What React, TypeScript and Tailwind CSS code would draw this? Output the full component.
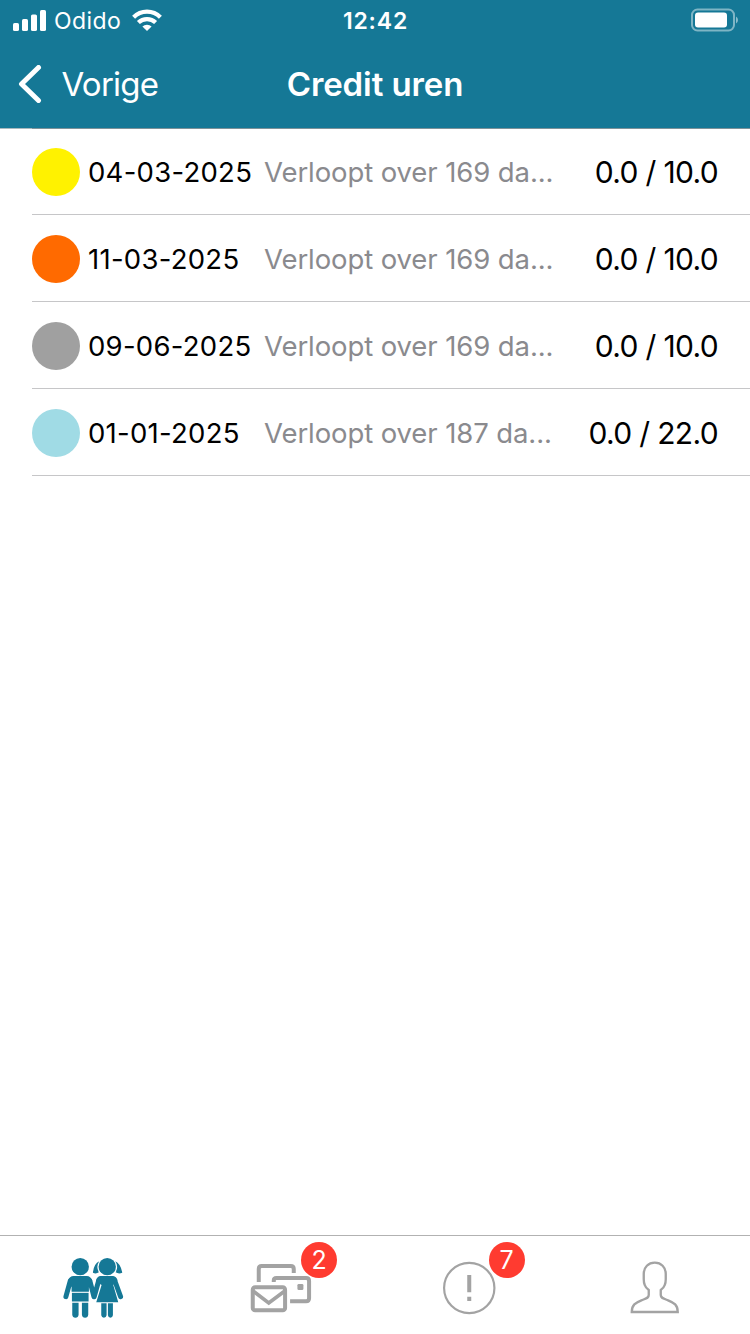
import type { ReactNode } from 'react'

interface Credit {
  date: string
  color: string
  expiry: string
  hours: string
}

const credits: Credit[] = [
  { date: '04-03-2025', color: 'bg-[#fff200]', expiry: 'Verloopt over 169 da...', hours: '0.0 / 10.0' },
  { date: '11-03-2025', color: 'bg-[#ff6a00]', expiry: 'Verloopt over 169 da...', hours: '0.0 / 10.0' },
  { date: '09-06-2025', color: 'bg-[#a0a0a0]', expiry: 'Verloopt over 169 da...', hours: '0.0 / 10.0' },
  { date: '01-01-2025', color: 'bg-[#a0dbe5]', expiry: 'Verloopt over 187 da...', hours: '0.0 / 22.0' },
]

function StatusBar() {
  return (
    <div className="grid h-10 grid-cols-3 items-center pl-[13px] pr-3">
      <div className="flex items-center">
        <svg width="33" height="21" viewBox="0 0 33 21" fill="#fff">
          <rect x="0" y="13" width="6" height="8" rx="1.6" />
          <rect x="9" y="9" width="6" height="12" rx="1.6" />
          <rect x="18" y="4.5" width="6" height="16.5" rx="1.6" />
          <rect x="27" y="0" width="6" height="21" rx="1.6" />
        </svg>
        <span className="ml-2 w-[78px] whitespace-nowrap pt-0.5 text-[23px] leading-none tracking-[0.4px]">Odido</span>
        <svg width="30" height="22" viewBox="0 0 30 22" fill="none" stroke="#fff" strokeWidth="4.2">
          <path d="M1.6 8.2a19 19 0 0 1 26.8 0" />
          <path d="M6.4 13.6a12.2 12.2 0 0 1 17.2 0" />
          <path d="M15 22l-4.6-4.4a6.5 6.5 0 0 1 9.2 0z" fill="#fff" stroke="none" />
        </svg>
      </div>
      <div className="pt-0.5 text-center text-[23px] font-semibold leading-none tracking-[0.8px]">12:42</div>
      <svg className="justify-self-end" width="48" height="24" viewBox="0 0 48 24">
        <rect x="2" y="1.5" width="42" height="21" rx="5.5" fill="none" stroke="#fff" strokeOpacity="0.45" strokeWidth="2" />
        <rect x="5" y="4.5" width="32" height="15" rx="3" fill="#fff" />
        <path d="M46 8.5q2 1 2 3.5t-2 3.5z" fill="#fff" fillOpacity="0.5" />
      </svg>
    </div>
  )
}

function NavBar() {
  return (
    <div className="grid h-[88px] grid-cols-3 items-center">
      <button className="flex items-center pl-[18px]">
        <svg width="24" height="38" viewBox="0 0 24 38" fill="none" stroke="#fff" strokeWidth="5" strokeLinecap="round" strokeLinejoin="round">
          <path d="M20.500 2.500L3.500 19L20.500 35.500" />
        </svg>
        <span className="ml-[19.5px] pt-px text-[33px] leading-none tracking-[-0.75px]">Vorige</span>
      </button>
      <h1 className="whitespace-nowrap text-center text-[33px] font-semibold leading-none tracking-[-0.1px]">Credit uren</h1>
    </div>
  )
}

function CreditRow({ credit }: { credit: Credit }) {
  return (
    <li className="ml-8 flex h-[87px] items-center border-b border-[#c6c6c8] pr-8 pt-0.5 first:h-[86px] first:pt-px">
      <span className={`size-12 shrink-0 rounded-full ${credit.color}`} />
      <span className="ml-2 w-[176px] shrink-0 whitespace-nowrap pt-0.5 text-[27.5px] leading-none tracking-[0.27px]">{credit.date}</span>
      <span className="whitespace-nowrap pt-0.5 text-[27.5px] leading-none tracking-[-0.1px] text-[#8a8a8e]">{credit.expiry}</span>
      <span className="ml-auto whitespace-nowrap pb-px text-[30px] leading-none tracking-[-0.65px]">{credit.hours}</span>
    </li>
  )
}

function Tab({ badge, children }: { badge?: number; children: ReactNode }) {
  return (
    <button className="relative flex h-[98px] flex-1 justify-center">
      {children}
      {badge !== undefined && (
        <span className="absolute left-[113.5px] top-1.5 flex size-9 items-center justify-center rounded-full bg-[#ff3b30] text-[25px] leading-none text-white">
          {badge}
        </span>
      )}
    </button>
  )
}

function TabBar() {
  return (
    <nav className="flex h-[99px] border-t border-[#b2b2b2]">
      <Tab>
        <svg width="100" height="98" viewBox="-18.75 33 300 294" fill="#157896">
          <g fill="none" stroke="#157896" strokeWidth="15" strokeLinecap="round">
            <path d="M60 168L47 215M119 168L131 215M145 168L132 215M194 168L211 215" />
          </g>
          {/* boy */}
          <circle cx="90" cy="125" r="26" />
          <path d="M70 153H110Q121 153 126 167L116 187V200H64V187L53 167Q58 153 70 153Z" />
          <path d="M65 203.500H115V229.500H65Z" />
          <path d="M66 233H85V269Q84 278 75.500 278T66 269ZM95 233H114V269Q113 278 104.500 278T95 269Z" />
          {/* girl */}
          <circle cx="171" cy="125" r="26" />
          <path d="M147 109Q131 116 128 143Q137 148 146 142Q136 125 147 109ZM195 109Q211 116 216 143Q206 148 196 142Q206 125 195 109Z" />
          <path d="M151 153H189Q198 154 202 166L189 180L204 232H138L154 180L137 167Q141 153 151 153Z" />
          <path d="M153 235H169V271Q168 278 161 278T153 271ZM173 235H188V271Q187 278 180.500 278T173 271Z" />
        </svg>
      </Tab>
      <Tab badge={2}>
        <svg width="100" height="98" viewBox="-26.25 33 300 294" fill="none" stroke="#a3a3a3" strokeWidth="12">
          <path d="M57 171V132Q57 123 66 123H153Q162 123 162 132V144" />
          <path d="M102 171V167Q102 159 110 159H199Q208 159 208 168V220Q208 229 199 229H151" />
          <rect x="39" y="187" width="97" height="69" rx="7" />
          <path d="M41 199L87 234L134 199" strokeWidth="11" />
          <rect x="173" y="177" width="18" height="18" rx="4" fill="#a3a3a3" stroke="none" />
        </svg>
      </Tab>
      <Tab badge={7}>
        <svg width="100" height="98" viewBox="-33.75 33 300 294" fill="none" stroke="#a3a3a3" strokeWidth="6.5">
          <circle cx="117" cy="189" r="75.5" />
          <path d="M117 150V202M117 215V228" strokeWidth="12" />
        </svg>
      </Tab>
      <Tab>
        <svg width="100" height="98" viewBox="-11.25 33 300 294" fill="none" stroke="#a3a3a3" strokeWidth="7">
          <path d="M66 261H204C204 240 193 233 175 226C160 220 153 219 153 210V195C159 191 163 186 165 180C168 173 168 169 168 163V147C168 126 154 113 135 113S102 126 102 147V163C102 169 102 173 105 180C107 186 111 191 117 195V210C117 219 110 220 95 226C77 233 66 240 66 261Z" />
        </svg>
      </Tab>
    </nav>
  )
}

export default function App() {
  return (
    <div className="flex h-[1334px] w-[750px] flex-col bg-white font-['Inter',sans-serif] text-black">
      <header className="h-32 bg-[#157896] text-white">
        <StatusBar />
        <NavBar />
      </header>
      <div className="h-px bg-[#a9b9be] pl-8">
        <div className="h-px bg-[#7d9299]" />
      </div>
      <ul className="flex-1">
        {credits.map(credit => (
          <CreditRow key={credit.date} credit={credit} />
        ))}
      </ul>
      <TabBar />
    </div>
  )
}
